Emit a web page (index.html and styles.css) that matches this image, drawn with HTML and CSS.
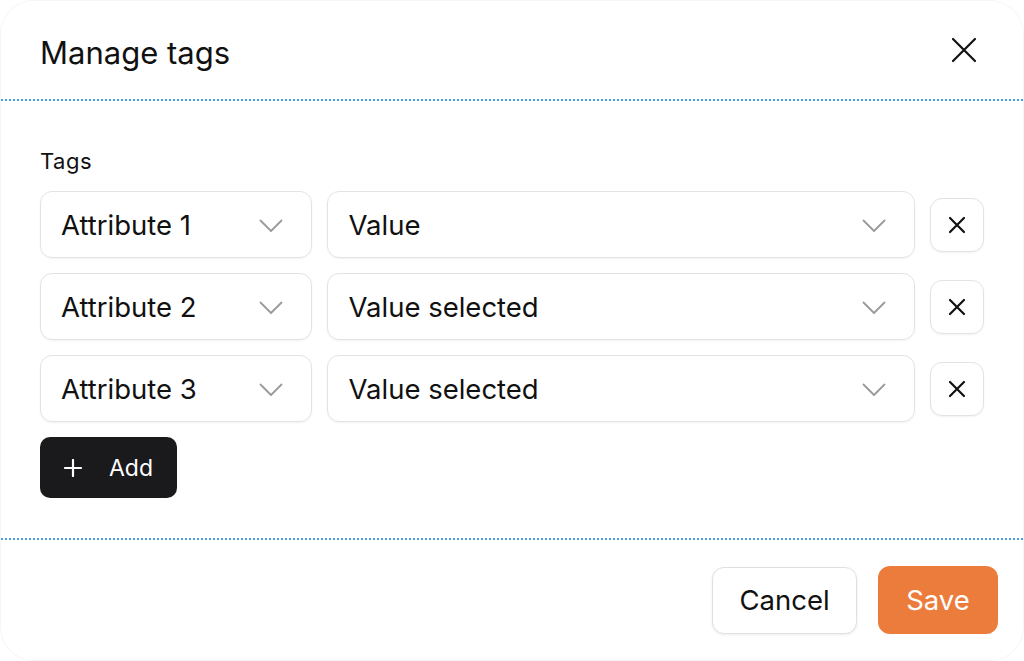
FILE: index.html
```html
<!DOCTYPE html>
<html>
<head>
<meta charset="utf-8">
<link rel="stylesheet" href="styles.css">
</head>
<body>
<div class="modal">
  <header class="head">
    <h1 class="title">Manage tags</h1>
    <button class="close" aria-label="Close">
      <svg width="26" height="26" viewBox="0 0 26 26"><path d="M2 2L24 24M24 2L2 24" stroke="#111" stroke-width="2.2" stroke-linecap="round" fill="none"/></svg>
    </button>
  </header>
  <section class="body">
    <div class="label">Tags</div>
    <div class="rows">
      <div class="row">
        <div class="select attr"><span>Attribute 1</span><svg class="chev" width="24" height="14" viewBox="0 0 24 14"><path d="M1.5 1.5L12 12L22.5 1.5" stroke="#9a9a9a" stroke-width="1.8" fill="none" stroke-linecap="round" stroke-linejoin="round"/></svg></div>
        <div class="select val"><span>Value</span><svg class="chev" width="24" height="14" viewBox="0 0 24 14"><path d="M1.5 1.5L12 12L22.5 1.5" stroke="#9a9a9a" stroke-width="1.8" fill="none" stroke-linecap="round" stroke-linejoin="round"/></svg></div>
        <button class="remove"><svg width="18" height="18" viewBox="0 0 18 18"><path d="M2 2L16 16M16 2L2 16" stroke="#111" stroke-width="2.2" stroke-linecap="round" fill="none"/></svg></button>
      </div>
      <div class="row">
        <div class="select attr"><span>Attribute 2</span><svg class="chev" width="24" height="14" viewBox="0 0 24 14"><path d="M1.5 1.5L12 12L22.5 1.5" stroke="#9a9a9a" stroke-width="1.8" fill="none" stroke-linecap="round" stroke-linejoin="round"/></svg></div>
        <div class="select val"><span>Value selected</span><svg class="chev" width="24" height="14" viewBox="0 0 24 14"><path d="M1.5 1.5L12 12L22.5 1.5" stroke="#9a9a9a" stroke-width="1.8" fill="none" stroke-linecap="round" stroke-linejoin="round"/></svg></div>
        <button class="remove"><svg width="18" height="18" viewBox="0 0 18 18"><path d="M2 2L16 16M16 2L2 16" stroke="#111" stroke-width="2.2" stroke-linecap="round" fill="none"/></svg></button>
      </div>
      <div class="row">
        <div class="select attr"><span>Attribute 3</span><svg class="chev" width="24" height="14" viewBox="0 0 24 14"><path d="M1.5 1.5L12 12L22.5 1.5" stroke="#9a9a9a" stroke-width="1.8" fill="none" stroke-linecap="round" stroke-linejoin="round"/></svg></div>
        <div class="select val"><span>Value selected</span><svg class="chev" width="24" height="14" viewBox="0 0 24 14"><path d="M1.5 1.5L12 12L22.5 1.5" stroke="#9a9a9a" stroke-width="1.8" fill="none" stroke-linecap="round" stroke-linejoin="round"/></svg></div>
        <button class="remove"><svg width="18" height="18" viewBox="0 0 18 18"><path d="M2 2L16 16M16 2L2 16" stroke="#111" stroke-width="2.2" stroke-linecap="round" fill="none"/></svg></button>
      </div>
    </div>
    <button class="add"><svg width="18" height="18" viewBox="0 0 18 18"><path d="M9 1V17M1 9H17" stroke="#fff" stroke-width="2.2" stroke-linecap="round" fill="none"/></svg><span>Add</span></button>
  </section>
  <footer class="foot">
    <button class="btn cancel">Cancel</button>
    <button class="btn save">Save</button>
  </footer>
</div>
</body>
</html>
```

FILE: styles.css
```css
* { box-sizing: border-box; }
html, body { margin: 0; padding: 0; background: #fff; }
body { font-family: Inter, "Noto Sans", sans-serif; color: #111; }
.modal {
  width: 1024px;
  height: 661px;
  border: 1px dotted #ececec;
  border-radius: 34px;
  background: #fff;
  display: flex;
  flex-direction: column;
  overflow: hidden;
}
.head {
  height: 100px;
  border-bottom: 2px dotted #4a9be6;
  display: flex;
  align-items: flex-start;
  justify-content: space-between;
  padding: 0 46px 0 39px;
}
.title {
  margin: 33px 0 0;
  font-size: 31px;
  line-height: 38px;
  font-weight: 400;
}
.close {
  margin-top: 36px;
  padding: 0;
  border: 0;
  background: none;
  width: 26px;
  height: 26px;
  display: flex;
}
.body {
  height: 439px;
  border-bottom: 2px dotted #4a9be6;
  padding: 45px 39px 0 39px;
}
.label {
  font-size: 22px;
  letter-spacing: 0.5px;
  line-height: 30px;
  margin-bottom: 15px;
}
.rows {
  display: flex;
  flex-direction: column;
  gap: 15px;
}
.row {
  display: flex;
  align-items: center;
}
.select {
  height: 67px;
  border: 1.5px solid #e3e3e3;
  border-radius: 12px;
  box-shadow: 0 1px 2px rgba(0,0,0,0.05);
  display: flex;
  align-items: center;
  justify-content: space-between;
  padding: 0 28px 0 20px;
  font-size: 27.5px;
}
.select span { margin-top: 1px; }
.attr { width: 273px; margin-right: 15px; }
.val { width: 589px; margin-right: 15px; padding-right: 28px; }
.chev { margin-top: 2px; }
.remove {
  width: 54px;
  height: 54px;
  border: 1.5px solid #e3e3e3;
  border-radius: 12px;
  background: #fff;
  box-shadow: 0 1px 2px rgba(0,0,0,0.05);
  display: flex;
  align-items: center;
  justify-content: center;
  padding: 0;
}
.add {
  margin-top: 15px;
  width: 137px;
  height: 61px;
  border: 0;
  border-radius: 10px;
  background: #1a1a1c;
  color: #fff;
  font-family: inherit;
  font-size: 23px;
  display: flex;
  align-items: center;
  padding: 0 0 0 24px;
  gap: 27px;
}
.foot {
  flex: 1;
  display: flex;
  justify-content: flex-end;
  align-items: center;
  gap: 21px;
  padding: 0 25px 0 0;
}
.btn {
  height: 67px;
  border-radius: 12px;
  font-family: inherit;
  font-size: 27.5px;
  padding: 0;
}
.cancel {
  width: 145px;
  background: #fff;
  border: 1.5px solid #e0e0e0;
  box-shadow: 0 1px 3px rgba(0,0,0,0.08);
  color: #111;
}
.save {
  width: 120px;
  height: 68px;
  background: #ec7c3c;
  border: 0;
  color: #fff;
}
```
